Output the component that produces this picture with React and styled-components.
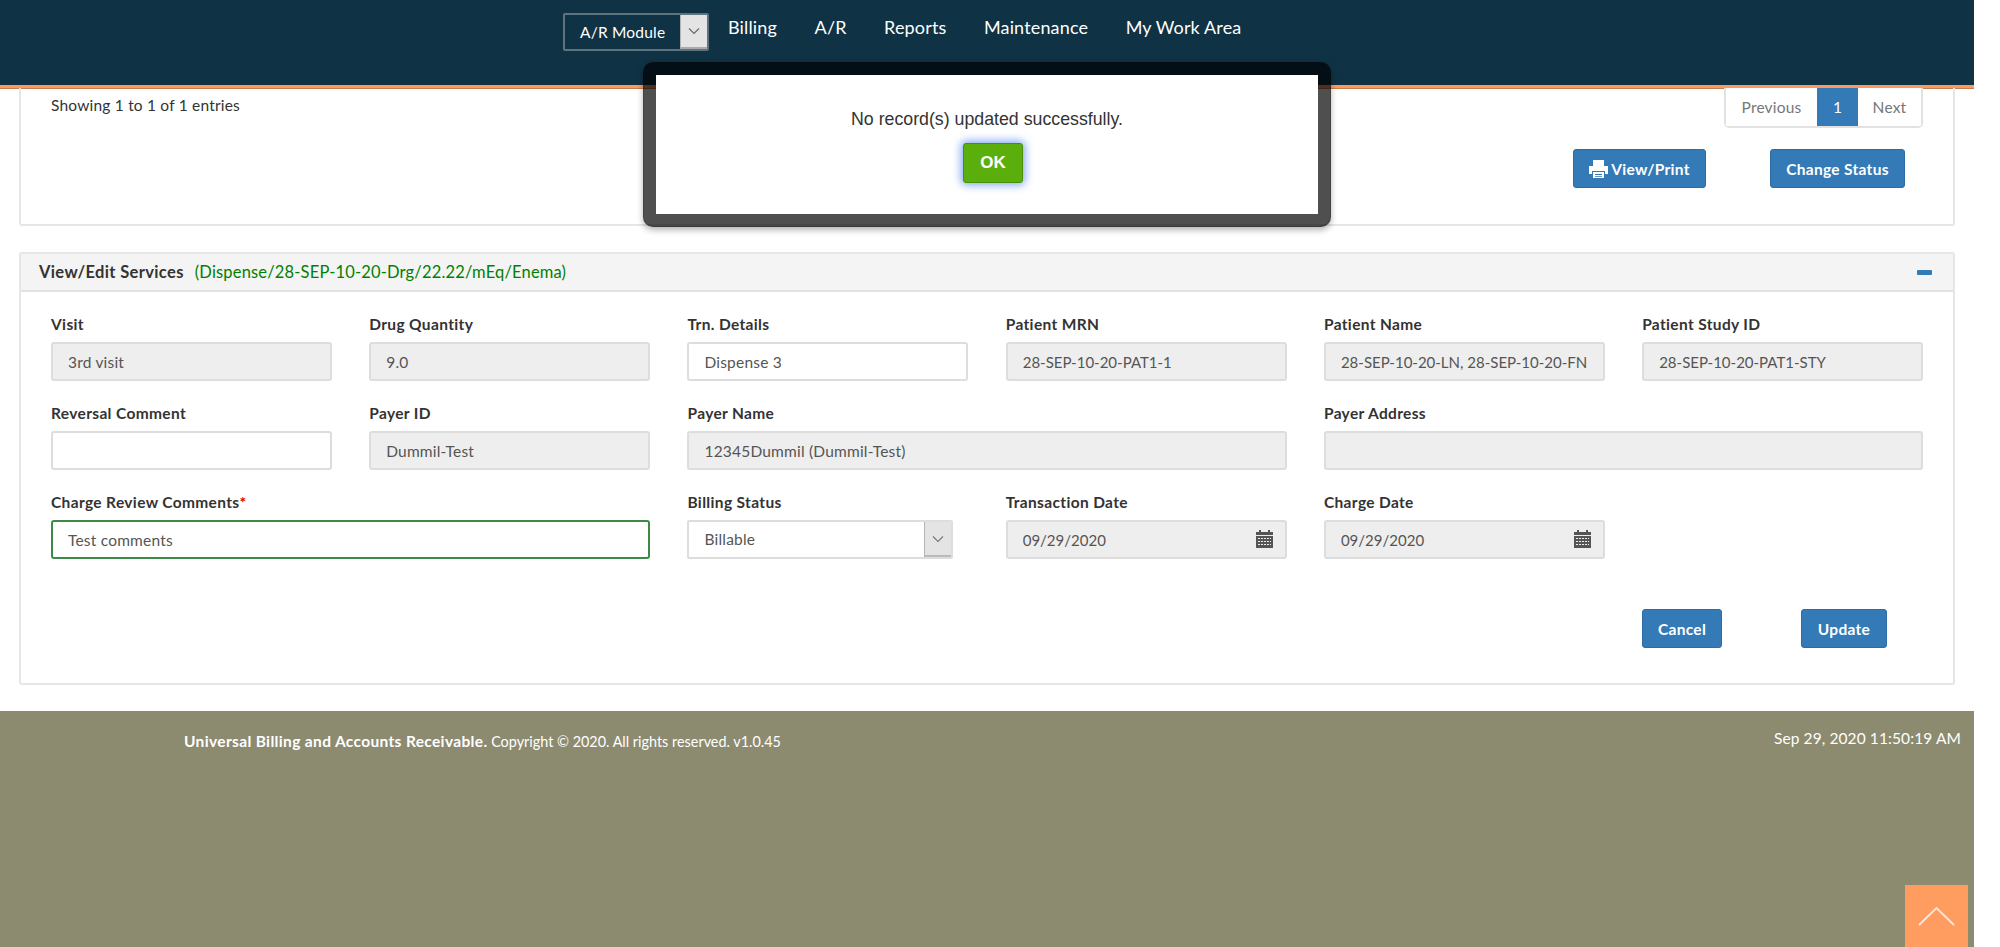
import styled, { createGlobalStyle } from "styled-components";

const GlobalStyle = createGlobalStyle`
  html, body {
    margin: 0;
    padding: 0;
    background: #fff;
    overflow: hidden;
  }
  body {
    font-family: Lato, "Open Sans", sans-serif;
    font-size: 15.5px;
    letter-spacing: 0.2px;
    color: #333;
  }
`;

const Page = styled.div`
  position: relative;
  width: 1974px;
  height: 947px;
  display: flex;
  flex-direction: column;
`;

const Header = styled.header`
  flex: none;
  box-sizing: border-box;
  height: 88px;
  padding: 13px 0 0 563px;
  display: flex;
  align-items: flex-start;
  background: #0f3244;
  border-bottom: 3px solid #fb9a5d;
  box-shadow: 0 1px 0 #c97d50;
`;

const Nav = styled.nav`
  display: flex;
  gap: 37.5px;
  margin-left: 19px;
`;

const NavLink = styled.a`
  color: #fff;
  font-size: 18px;
  letter-spacing: 0.15px;
  line-height: 28px;
`;

const SelectBox = styled.div`
  box-sizing: border-box;
  display: flex;
  align-items: stretch;
  justify-content: space-between;
  background: ${(p) => (p.$dark ? "transparent" : "#fff")};
  width: ${(p) => (p.$dark ? "146px" : "266px")};
  height: ${(p) => (p.$dark ? "38px" : "39px")};
  border: 2px solid ${(p) => (p.$dark ? "#5f7280" : "#ddd")};
  border-radius: 2px;
  color: ${(p) => (p.$dark ? "#fff" : "#555")};
  line-height: 34px;
  padding-left: 15px;
`;

const ArrowBox = styled.span`
  flex: none;
  width: 26px;
  display: flex;
  align-items: center;
  justify-content: center;
  background: #e4e4e4;
  border-left: 1px solid #b4b4b4;
  border-bottom: ${(p) => (p.$dark ? "2px solid #aaa" : "2px solid #bbb")};
`;

const Main = styled.main`
  flex: none;
  padding: 0 19px;
  display: flex;
  flex-direction: column;
`;

const TopCard = styled.section`
  box-sizing: border-box;
  height: 138px;
  padding: 0 30px;
  border: 2px solid #e6e6e6;
  border-top: none;
  border-radius: 0 0 3px 3px;
`;

const TableFooter = styled.div`
  display: flex;
  justify-content: space-between;
  align-items: flex-start;
`;

const EntriesInfo = styled.div`
  padding-top: 7px;
  line-height: 20px;
  color: #333;
`;

const Pagination = styled.div`
  display: flex;
  height: 40px;
  box-sizing: border-box;
  border: 2px solid #e2e2e2;
  border-top: none;
  border-radius: 0 0 5px 5px;
`;

const PageItem = styled.span`
  box-sizing: border-box;
  display: flex;
  align-items: center;
  justify-content: center;
  padding-bottom: 1px;
  width: ${(p) => p.$w}px;
  color: ${(p) => (p.$active ? "#fff" : "#777")};
  background: ${(p) => (p.$active ? "#337ab7" : "#fff")};
`;

const ActionRow = styled.div`
  display: flex;
  justify-content: flex-end;
  gap: 64px;
  margin-top: 21px;
  padding-right: 18px;
`;

const Button = styled.button`
  box-sizing: border-box;
  display: inline-flex;
  align-items: center;
  justify-content: center;
  gap: 3px;
  height: 39px;
  width: ${(p) => p.$w}px;
  padding: 0;
  border: 1px solid #2e6da4;
  border-radius: 3px;
  background: #337ab7;
  color: #fff;
  font-family: inherit;
  font-size: 15.5px;
  letter-spacing: 0.3px;
  font-weight: 700;
`;

const Card = styled.section`
  box-sizing: border-box;
  height: 433px;
  margin-top: 26px;
  border: 2px solid #e6e6e6;
  border-radius: 3px;
`;

const CardHeader = styled.div`
  box-sizing: border-box;
  height: 38px;
  display: flex;
  align-items: center;
  padding: 0 21px 0 18px;
  background: #f4f4f4;
  border-bottom: 2px solid #e2e2e2;
`;

const CardTitle = styled.strong`
  font-weight: 700;
  color: #333;
  font-size: 16.5px;
  letter-spacing: 0.35px;
`;

const CardSubtitle = styled.span`
  margin-left: 11px;
  color: #008000;
  font-size: 16.5px;
  letter-spacing: 0.17px;
`;

const Collapse = styled.span`
  width: 15px;
  height: 5px;
  margin-left: auto;
  border-radius: 1px;
  background: #337ab7;
`;

const CardBody = styled.div`
  padding: 22px 30px 0;
`;

const FormGrid = styled.div`
  display: grid;
  grid-template-columns: repeat(6, 1fr);
  column-gap: 37.4px;
  row-gap: 22px;
`;

const Field = styled.div`
  grid-column: span ${(p) => p.$span || 1};
  min-width: 0;
`;

const Label = styled.label`
  display: block;
  height: 20px;
  margin-bottom: 8px;
  line-height: 20px;
  font-weight: 700;
  letter-spacing: 0.35px;
  color: #333;
`;

const Required = styled.span`
  color: #e00000;
`;

const InputWrap = styled.div`
  position: relative;
`;

const Input = styled.input`
  box-sizing: border-box;
  display: block;
  width: 100%;
  height: 39px;
  padding: 0 15px;
  border: 2px solid ${(p) => (p.$valid ? "#3c8a46" : "#ddd")};
  border-radius: 3px;
  background: ${(p) => (p.disabled ? "#eee" : "#fff")};
  color: #555;
  font-family: inherit;
  font-size: ${(p) => (p.$caps ? "15px" : "15.5px")};
  letter-spacing: ${(p) => (p.$caps ? "0" : "0.2px")};
  outline: none;
  opacity: 1;
  -webkit-text-fill-color: #555;
`;

const CalendarMark = styled.svg`
  position: absolute;
  right: 14px;
  top: 10px;
`;

const FormActions = styled.div`
  display: flex;
  justify-content: flex-end;
  gap: 79px;
  margin-top: 50px;
  padding-right: 36px;
`;

const Footer = styled.footer`
  flex: 1;
  margin-top: 26px;
  background: #8c8b70;
  color: #fff;
  display: flex;
  justify-content: space-between;
  align-items: flex-start;
  padding: 17px 13px 0 184px;
`;

const Copyright = styled.div`
  line-height: 20px;
  padding-top: 3px;
  font-size: 14.4px;
  letter-spacing: 0;
`;

const ProductName = styled.strong`
  font-size: 15.5px;
  letter-spacing: 0.35px;
`;

const Clock = styled.div`
  line-height: 20px;
  letter-spacing: 0.1px;
`;

const ToTop = styled.a`
  position: absolute;
  left: 1905px;
  top: 885px;
  width: 63px;
  height: 62px;
  display: flex;
  align-items: center;
  justify-content: center;
  background: #ff9c5f;
`;

const Modal = styled.div`
  position: absolute;
  left: 643px;
  top: 62px;
  box-sizing: border-box;
  width: 688px;
  height: 165px;
  border: 13px solid rgba(0, 0, 0, 0.69);
  border-radius: 10px;
  background: #fff;
  background-clip: padding-box;
  box-shadow: 0 3px 6px rgba(0, 0, 0, 0.3);
  display: flex;
  flex-direction: column;
  align-items: center;
`;

const ModalText = styled.p`
  margin: 32px 0 0;
  font-family: "Liberation Sans", Arial, sans-serif;
  font-size: 17.75px;
  letter-spacing: 0;
  line-height: 24px;
  color: #333;
`;

const OkButton = styled.button`
  box-sizing: border-box;
  width: 60px;
  height: 40px;
  margin: 12px 0 0 12px;
  padding: 0;
  border: 1px solid #4a8f0a;
  border-radius: 3px;
  background: #5aaf0c;
  color: #fff;
  font-family: "Liberation Sans", Arial, sans-serif;
  font-size: 17px;
  font-weight: 700;
  box-shadow: 0 0 8px 2px rgba(60, 120, 230, 0.65);
`;

const Chevron = ({ color = "#777" }) => (
  <svg width="12" height="8" viewBox="0 0 12 8" fill="none">
    <path d="M1 1.5 L6 6.5 L11 1.5" stroke={color} strokeWidth="1.1" />
  </svg>
);

const PrintIcon = () => (
  <svg width="19" height="18" viewBox="0 0 19 18" fill="#fff">
    <path d="M4 0h11v6h-2V2H6v4H4z" />
    <path d="M5 1h9v5H5z" />
    <path d="M0 6h19v8h-3v-3H3v3H0z" />
    <path d="M4 12h11v6H4zM6 14v1h7v-1zM6 16v.7h7V16z" fillRule="evenodd" />
  </svg>
);

const CalendarIcon = () => (
  <CalendarMark width="17" height="18" viewBox="0 0 17 18">
    <path d="M0 2h3V0h2v2h7V0h2v2h3v3H0z" fill="#555" />
    <path
      fillRule="evenodd"
      d="M0 6h17v12H0zM2 8v1h2V8zm3 0v1h2V8zm3 0v1h2V8zm3 0v1h2V8zm3 0v1h1V8zM2 11v1h2v-1zm3 0v1h2v-1zm3 0v1h2v-1zm3 0v1h2v-1zm3 0v1h1v-1zM2 14v1h2v-1zm3 0v1h2v-1zm3 0v1h2v-1zm3 0v1h2v-1zm3 0v1h1v-1z"
      fill="#555"
    />
  </CalendarMark>
);

const fieldRows = [
  { label: "Visit", value: "3rd visit", disabled: true },
  { label: "Drug Quantity", value: "9.0", disabled: true },
  { label: "Trn. Details", value: "Dispense 3" },
  { label: "Patient MRN", value: "28-SEP-10-20-PAT1-1", disabled: true, caps: true },
  { label: "Patient Name", value: "28-SEP-10-20-LN, 28-SEP-10-20-FN", disabled: true, caps: true },
  { label: "Patient Study ID", value: "28-SEP-10-20-PAT1-STY", disabled: true, caps: true },
  { label: "Reversal Comment", value: "" },
  { label: "Payer ID", value: "Dummil-Test", disabled: true },
  { label: "Payer Name", value: "12345Dummil (Dummil-Test)", disabled: true, span: 2 },
  { label: "Payer Address", value: "", disabled: true, span: 2 },
];

export default function App() {
  return (
    <Page>
      <GlobalStyle />
      <Header>
        <SelectBox $dark>
          A/R Module
          <ArrowBox $dark>
            <Chevron color="#666" />
          </ArrowBox>
        </SelectBox>
        <Nav>
          <NavLink>Billing</NavLink>
          <NavLink>A/R</NavLink>
          <NavLink>Reports</NavLink>
          <NavLink>Maintenance</NavLink>
          <NavLink>My Work Area</NavLink>
        </Nav>
      </Header>

      <Main>
        <TopCard>
          <TableFooter>
            <EntriesInfo>Showing 1 to 1 of 1 entries</EntriesInfo>
            <Pagination>
              <PageItem $w={91}>Previous</PageItem>
              <PageItem $w={41} $active>
                1
              </PageItem>
              <PageItem $w={63}>Next</PageItem>
            </Pagination>
          </TableFooter>
          <ActionRow>
            <Button $w={133}>
              <PrintIcon />
              View/Print
            </Button>
            <Button $w={135}>Change Status</Button>
          </ActionRow>
        </TopCard>

        <Card>
          <CardHeader>
            <CardTitle>View/Edit Services</CardTitle>
            <CardSubtitle>(Dispense/28-SEP-10-20-Drg/22.22/mEq/Enema)</CardSubtitle>
            <Collapse />
          </CardHeader>
          <CardBody>
            <FormGrid>
              {fieldRows.map((f) => (
                <Field key={f.label} $span={f.span}>
                  <Label>{f.label}</Label>
                  <Input readOnly disabled={f.disabled} $caps={f.caps} value={f.value} />
                </Field>
              ))}
              <Field $span={2}>
                <Label>
                  Charge Review Comments<Required>*</Required>
                </Label>
                <Input readOnly $valid value="Test comments" />
              </Field>
              <Field>
                <Label>Billing Status</Label>
                <SelectBox>
                  Billable
                  <ArrowBox>
                    <Chevron />
                  </ArrowBox>
                </SelectBox>
              </Field>
              <Field>
                <Label>Transaction Date</Label>
                <InputWrap>
                  <Input readOnly disabled $caps value="09/29/2020" />
                  <CalendarIcon />
                </InputWrap>
              </Field>
              <Field>
                <Label>Charge Date</Label>
                <InputWrap>
                  <Input readOnly disabled $caps value="09/29/2020" />
                  <CalendarIcon />
                </InputWrap>
              </Field>
            </FormGrid>
            <FormActions>
              <Button $w={80}>Cancel</Button>
              <Button $w={86}>Update</Button>
            </FormActions>
          </CardBody>
        </Card>
      </Main>

      <Footer>
        <Copyright>
          <ProductName>Universal Billing and Accounts Receivable.</ProductName> Copyright © 2020. All rights reserved. v1.0.45
        </Copyright>
        <Clock>Sep 29, 2020 11:50:19 AM</Clock>
      </Footer>

      <ToTop>
        <svg width="37" height="20" viewBox="0 0 37 20" fill="none">
          <path d="M1 19 L18.5 2 L36 19" stroke="#ffe6d6" strokeWidth="1.8" />
        </svg>
      </ToTop>

      <Modal>
        <ModalText>No record(s) updated successfully.</ModalText>
        <OkButton>OK</OkButton>
      </Modal>
    </Page>
  );
}
